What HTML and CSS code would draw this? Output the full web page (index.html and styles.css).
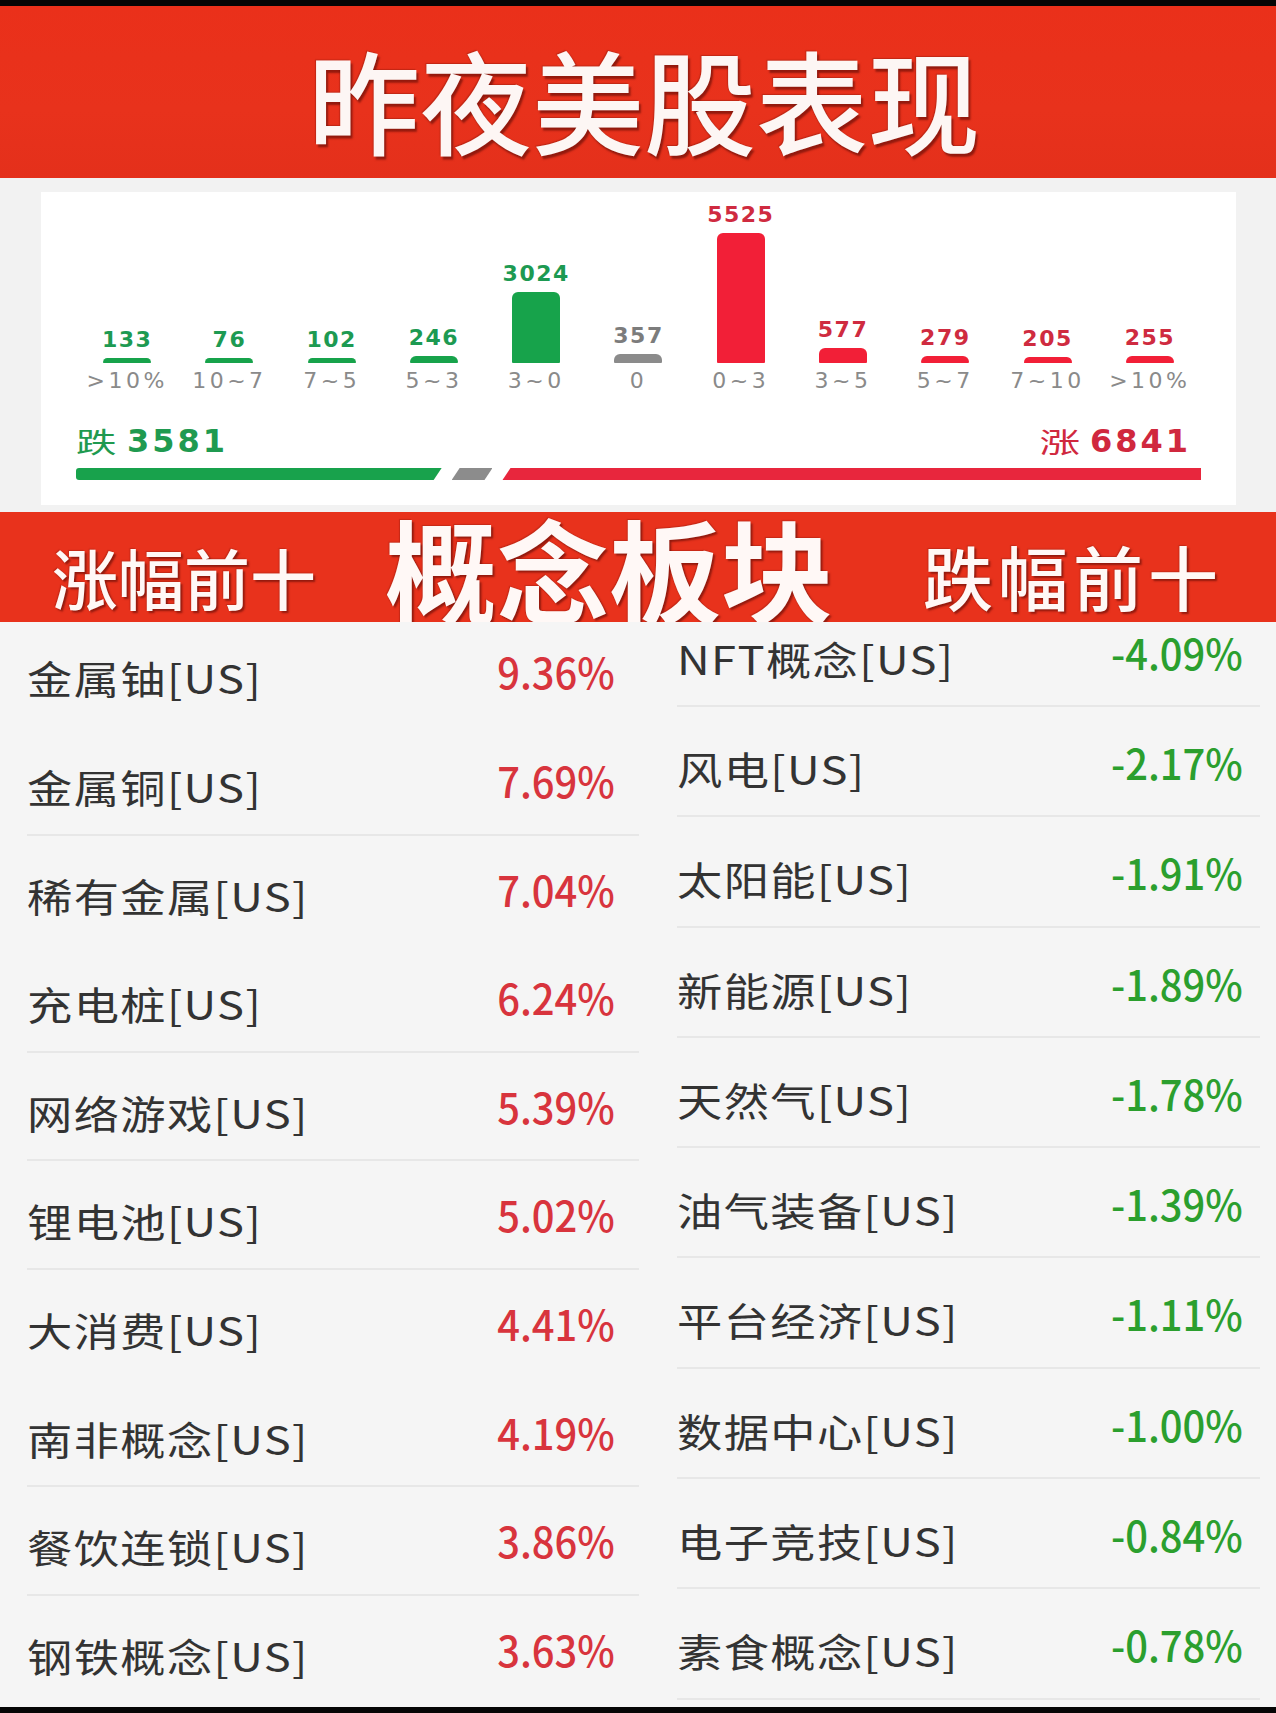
FILE: index.html
```html
<!DOCTYPE html>
<html lang="zh-CN">
<head>
<meta charset="utf-8">
<title>昨夜美股表现</title>
<link rel="stylesheet" href="styles.css">
</head>
<body>
<div class="page">
  <div class="edge"></div>
  <header class="hero"><h1 class="hero-title">昨夜美股表现</h1></header>

  <section class="dist">
    <div class="card">
      <div class="bars">
        <div class="bcol down"><span class="num">133</span><span class="bar" style="height:5px"></span></div>
        <div class="bcol down"><span class="num">76</span><span class="bar" style="height:5px"></span></div>
        <div class="bcol down"><span class="num">102</span><span class="bar" style="height:5px"></span></div>
        <div class="bcol down"><span class="num">246</span><span class="bar" style="height:7px"></span></div>
        <div class="bcol down"><span class="num">3024</span><span class="bar" style="height:71px"></span></div>
        <div class="bcol flat"><span class="num">357</span><span class="bar" style="height:9px"></span></div>
        <div class="bcol up"><span class="num">5525</span><span class="bar" style="height:130px"></span></div>
        <div class="bcol up"><span class="num">577</span><span class="bar" style="height:15px"></span></div>
        <div class="bcol up"><span class="num">279</span><span class="bar" style="height:7px"></span></div>
        <div class="bcol up"><span class="num">205</span><span class="bar" style="height:6px"></span></div>
        <div class="bcol up"><span class="num">255</span><span class="bar" style="height:7px"></span></div>
      </div>
      <div class="ranges">
        <span>&gt;10%</span><span>10~7</span><span>7~5</span><span>5~3</span><span>3~0</span><span>0</span><span>0~3</span><span>3~5</span><span>5~7</span><span>7~10</span><span>&gt;10%</span>
      </div>
      <div class="totals">
        <div class="total down"><span class="total-label">跌</span><span class="total-num">3581</span></div>
        <div class="total up"><span class="total-label">涨</span><span class="total-num">6841</span></div>
      </div>
      <div class="progress">
        <span class="seg seg-down" style="flex-grow:3581"></span>
        <span class="seg seg-flat" style="flex-grow:400"></span>
        <span class="seg seg-up" style="flex-grow:6841"></span>
      </div>
    </div>
  </section>

  <div class="band">
    <span class="band-side">涨幅前十</span>
    <span class="band-main">概念板块</span>
    <span class="band-side band-right">跌幅前十</span>
  </div>

  <section class="lists">
    <div class="col col-up">
      <div class="row first nodiv"><span class="name">金属铀[US]</span><span class="pct">9.36%</span></div>
      <div class="row"><span class="name">金属铜[US]</span><span class="pct">7.69%</span></div>
      <div class="row nodiv"><span class="name">稀有金属[US]</span><span class="pct">7.04%</span></div>
      <div class="row"><span class="name">充电桩[US]</span><span class="pct">6.24%</span></div>
      <div class="row"><span class="name">网络游戏[US]</span><span class="pct">5.39%</span></div>
      <div class="row"><span class="name">锂电池[US]</span><span class="pct">5.02%</span></div>
      <div class="row nodiv"><span class="name">大消费[US]</span><span class="pct">4.41%</span></div>
      <div class="row"><span class="name">南非概念[US]</span><span class="pct">4.19%</span></div>
      <div class="row"><span class="name">餐饮连锁[US]</span><span class="pct">3.86%</span></div>
      <div class="row nodiv"><span class="name">钢铁概念[US]</span><span class="pct">3.63%</span></div>
    </div>
    <div class="col col-down">
      <div class="row first"><span class="name">NFT概念[US]</span><span class="pct">-4.09%</span></div>
      <div class="row"><span class="name">风电[US]</span><span class="pct">-2.17%</span></div>
      <div class="row"><span class="name">太阳能[US]</span><span class="pct">-1.91%</span></div>
      <div class="row"><span class="name">新能源[US]</span><span class="pct">-1.89%</span></div>
      <div class="row"><span class="name">天然气[US]</span><span class="pct">-1.78%</span></div>
      <div class="row"><span class="name">油气装备[US]</span><span class="pct">-1.39%</span></div>
      <div class="row"><span class="name">平台经济[US]</span><span class="pct">-1.11%</span></div>
      <div class="row"><span class="name">数据中心[US]</span><span class="pct">-1.00%</span></div>
      <div class="row"><span class="name">电子竞技[US]</span><span class="pct">-0.84%</span></div>
      <div class="row"><span class="name">素食概念[US]</span><span class="pct">-0.78%</span></div>
    </div>
  </section>
  <div class="edge"></div>
</div>
</body>
</html>
```

FILE: styles.css
```css
* { box-sizing: border-box; }
html, body { margin: 0; padding: 0; background: #000; }
body { font-family: "Noto Sans CJK SC", "Noto Sans", sans-serif; }

.page {
  width: 1276px;
  height: 1713px;
  overflow: hidden;
  display: flex;
  flex-direction: column;
}

.edge { height: 6px; background: #050505; flex: none; }

/* ---------- header ---------- */
.hero {
  height: 172px;
  flex: none;
  background: linear-gradient(180deg, #ea301a 0%, #e8321c 60%, #e4301b 100%);
  display: flex;
  justify-content: center;
  align-items: flex-start;
  padding-top: 36px;
  padding-left: 12px;
}
.hero-title {
  margin: 0;
  font-size: 112px;
  line-height: 112px;
  font-weight: 500;
  color: #fdf6f4;
  text-shadow: 2px 3px 2px rgba(90, 10, 5, 0.6), -1px -1px 1px rgba(120, 20, 10, 0.35);
}

/* ---------- distribution card ---------- */
.dist {
  height: 334px;
  flex: none;
  background: #f2f2f2;
  padding: 14px 0 0 41px;
}
.card {
  width: 1195px;
  height: 313px;
  background: #ffffff;
  padding: 8px 35px 0;
  font-family: "DejaVu Sans", "Noto Sans", sans-serif;
}
.bars {
  height: 163px;
  display: grid;
  grid-template-columns: repeat(11, 1fr);
  align-items: end;
}
.bcol {
  display: flex;
  flex-direction: column;
  align-items: center;
}
.num {
  font-size: 22px;
  line-height: 24px;
  font-weight: 700;
  letter-spacing: 1.5px;
  margin-bottom: 6px;
}
.bar {
  display: block;
  width: 48px;
  border-radius: 6px 6px 1px 1px;
}
.down .num { color: #1d9a52; }
.down .bar { background: #17a34b; }
.flat .num { color: #7c7c7c; }
.flat .bar { background: #8b8b8b; }
.up .num { color: #cf2b40; }
.up .bar { background: #f21f37; }

.ranges {
  margin-top: 6px;
  display: grid;
  grid-template-columns: repeat(11, 1fr);
  font-size: 22px;
  line-height: 24px;
  color: #8a8a8a;
  letter-spacing: 3.5px;
  text-align: center;
}

.totals {
  margin-top: 30px;
  height: 36px;
  display: flex;
  justify-content: space-between;
  align-items: center;
  padding-right: 10px;
}
.total { display: flex; align-items: center; }
.total-label {
  display: inline-block;
  font-family: "Noto Sans CJK SC", sans-serif;
  font-size: 28px;
  line-height: 36px;
  transform: scaleX(1.45);
}
.total.down .total-label { transform-origin: left center; margin-right: 13px; }
.total.up .total-label { transform-origin: right center; }
.total-num {
  margin-left: 10px;
  font-size: 32px;
  line-height: 36px;
  font-weight: 700;
  letter-spacing: 3px;
}
.total.down { color: #1f9a50; }
.total.up { color: #d0283e; }

.progress {
  margin-top: 9px;
  height: 12px;
  display: flex;
  gap: 10px;
}
.seg { display: block; height: 12px; flex-basis: 0; }
.seg-down {
  background: #18a24c;
  border-radius: 3px 0 0 3px;
  clip-path: polygon(0 0, 100% 0, calc(100% - 8px) 100%, 0 100%);
}
.seg-flat {
  background: #8c8c8c;
  clip-path: polygon(8px 0, 100% 0, calc(100% - 8px) 100%, 0 100%);
}
.seg-up {
  background: #e8263d;
  clip-path: polygon(8px 0, 100% 0, 100% 100%, 0 100%);
}

/* ---------- band ---------- */
.band {
  height: 110px;
  flex: none;
  background: #e8321c;
  display: flex;
  align-items: center;
  padding-left: 52px;
  color: #fff8f6;
  text-shadow: 2px 2px 2px rgba(90, 10, 5, 0.6), -1px -1px 1px rgba(120, 20, 10, 0.3);
}
.band-side {
  font-size: 66px;
  line-height: 66px;
  font-weight: 500;
  margin-top: 18px;
}
.band-main {
  font-size: 112px;
  line-height: 96px;
  font-weight: 600;
  margin-left: 69px;
  margin-top: 0;
}
.band-right {
  font-size: 70px;
  line-height: 66px;
  letter-spacing: 5px;
  margin-left: 90px;
}

/* ---------- lists ---------- */
.lists {
  height: 1085px;
  flex: none;
  background: #f5f5f5;
  display: flex;
  padding-left: 27px;
  gap: 38px;
}
.col { display: flex; flex-direction: column; }
.col-up { width: 612px; }
.col-down { width: 583px; }

.row {
  display: flex;
  justify-content: space-between;
  align-items: flex-start;
  border-bottom: 2px solid #e7e7e7;
  flex: none;
}
.row.nodiv { border-bottom-color: transparent; }

.col-up .row { height: 108.6px; padding: 37px 24px 0 0; }
.col-up .row.first { height: 105px; padding-top: 33px; }
.col-down .row { height: 110.3px; padding: 39px 17px 0 0; }
.col-down .row.first { height: 85px; padding-top: 14px; }

.name {
  display: inline-block;
  font-size: 39px;
  line-height: 44px;
  letter-spacing: 1.2px;
  color: #333333;
  transform: scaleX(1.16);
  transform-origin: left center;
}
.pct {
  display: inline-block;
  font-size: 42px;
  line-height: 44px;
  font-weight: 500;
  margin-top: -6px;
  transform: scaleX(0.95);
  transform-origin: right center;
}
.col-up .pct { color: #d8343d; }
.col-down .pct { color: #2b9f2e; }
```
